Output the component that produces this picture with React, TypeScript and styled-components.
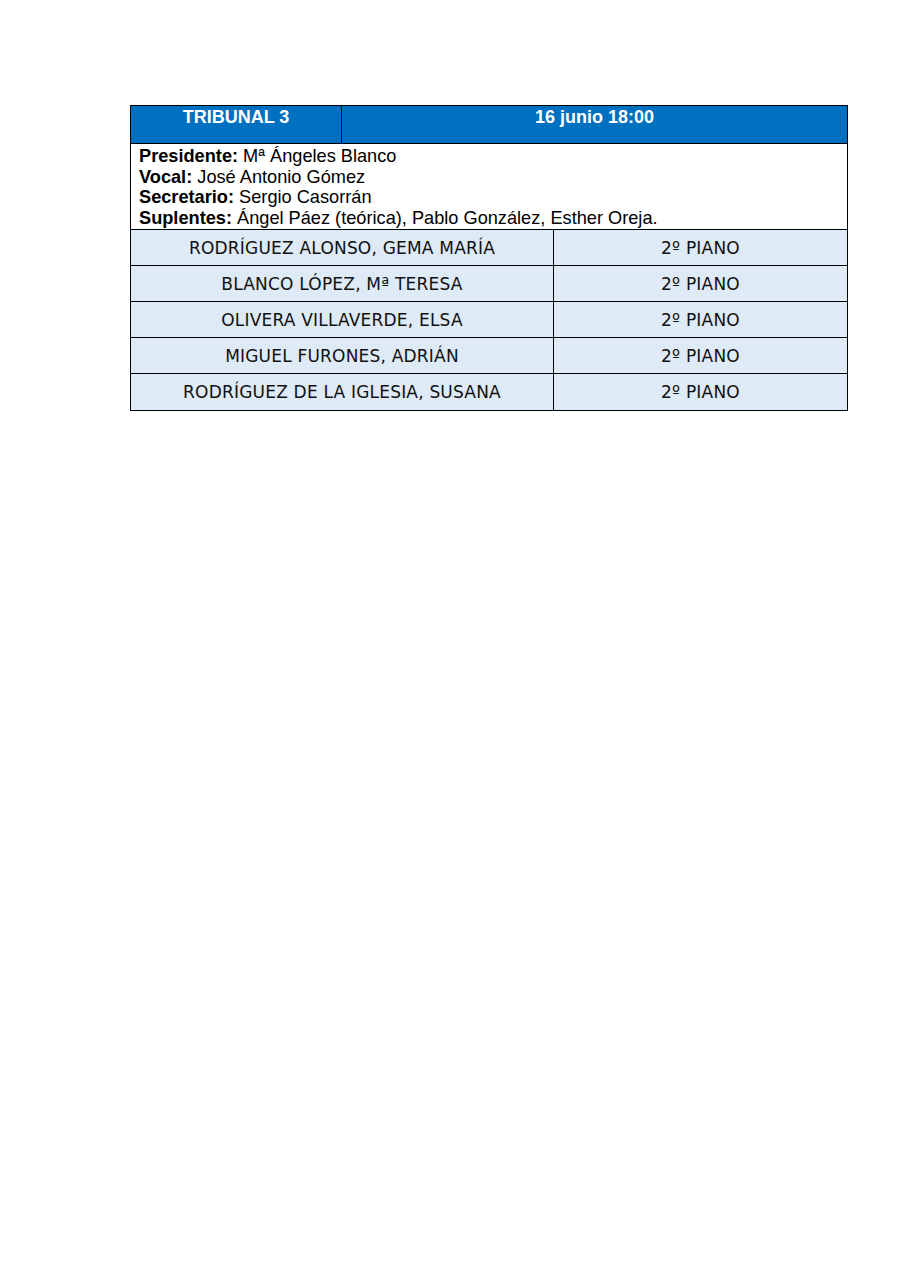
import React from "react";
import styled, { createGlobalStyle } from "styled-components";

const Global = createGlobalStyle`
  html, body { margin: 0; padding: 0; background: #ffffff; }
  body { font-family: "Liberation Sans", Arial, sans-serif; }
`;

const Page = styled.div`
  width: 910px;
  min-height: 1286px;
  padding: 105px 0 0 130px;
  box-sizing: border-box;
  background: #ffffff;
`;

const Sheet = styled.div`
  width: 718px;
  border: 1px solid #000;
  border-bottom: none;
  box-sizing: border-box;
`;

const HeaderRow = styled.div`
  display: grid;
  grid-template-columns: 211px 1fr;
  background: #0070c0;
  border-bottom: 1px solid #000;
  height: 38px;
  box-sizing: border-box;
`;

const HeaderCell = styled.div<{ $divider?: boolean }>`
  color: #ffffff;
  font-family: "Liberation Sans", Arial, sans-serif;
  font-weight: 700;
  font-size: 18px;
  line-height: 20.7px;
  text-align: center;
  padding-top: 1px;
  ${(p) => (p.$divider ? "border-right: 1px solid #000;" : "")}
`;

const InfoBlock = styled.div`
  border-bottom: 1px solid #000;
  padding: 2px 8px 0 8px;
  height: 86px;
  box-sizing: border-box;
  font-family: "Liberation Sans", Arial, sans-serif;
  font-size: 18.2px;
  line-height: 20.6px;
  color: #000;
  overflow: hidden;
`;

const InfoLine = styled.div`
  white-space: nowrap;
`;

const Label = styled.b`
  font-weight: 700;
`;

const Row = styled.div<{ $h: number }>`
  display: grid;
  grid-template-columns: 423px 1fr;
  height: ${(p) => p.$h}px;
  background: #deeaf6;
  border-bottom: 1px solid #000;
  box-sizing: border-box;
`;

const Cell = styled.div<{ $divider?: boolean }>`
  display: flex;
  align-items: center;
  justify-content: center;
  font-family: "DejaVu Sans", Verdana, sans-serif;
  font-size: 17px;
  letter-spacing: 0.2px;
  color: #111;
  white-space: nowrap;
  ${(p) => (p.$divider ? "border-right: 1px solid #000;" : "")}
`;

const students = [
  { name: "RODRÍGUEZ ALONSO, GEMA MARÍA", course: "2º PIANO", h: 36 },
  { name: "BLANCO LÓPEZ, Mª TERESA", course: "2º PIANO", h: 36 },
  { name: "OLIVERA VILLAVERDE, ELSA", course: "2º PIANO", h: 36 },
  { name: "MIGUEL FURONES, ADRIÁN", course: "2º PIANO", h: 36 },
  { name: "RODRÍGUEZ DE LA IGLESIA, SUSANA", course: "2º PIANO", h: 37 },
];

export default function App() {
  return (
    <>
      <Global />
      <Page>
        <Sheet>
          <HeaderRow>
            <HeaderCell $divider>TRIBUNAL 3</HeaderCell>
            <HeaderCell>16 junio 18:00</HeaderCell>
          </HeaderRow>
          <InfoBlock>
            <InfoLine>
              <Label>Presidente:</Label> Mª Ángeles Blanco
            </InfoLine>
            <InfoLine>
              <Label>Vocal:</Label> José Antonio Gómez
            </InfoLine>
            <InfoLine>
              <Label>Secretario:</Label> Sergio Casorrán
            </InfoLine>
            <InfoLine>
              <Label>Suplentes:</Label> Ángel Páez (teórica), Pablo González, Esther Oreja.
            </InfoLine>
          </InfoBlock>
          {students.map((s) => (
            <Row key={s.name} $h={s.h}>
              <Cell $divider>{s.name}</Cell>
              <Cell>{s.course}</Cell>
            </Row>
          ))}
        </Sheet>
      </Page>
    </>
  );
}
